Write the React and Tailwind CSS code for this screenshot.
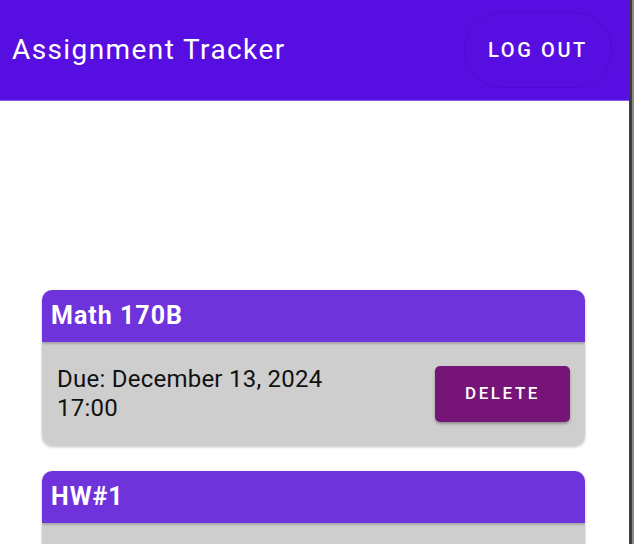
import React from "react";

const assignments = [
  { title: "Math 170B", due: "Due: December 13, 2024", time: "17:00" },
  { title: "HW#1", due: "Due: December 20, 2024", time: "17:00" },
];

const AssignmentCard = ({ title, due, time }) => {
  return (
    <div className="shrink-0 rounded-[10px] overflow-hidden shadow-[0_1px_3px_rgba(0,0,0,0.25)]">
      {/* Header */}
      <div className="h-[52px] bg-[#6f33dc] flex items-center px-[9px] shadow-[0_2px_2px_rgba(0,0,0,0.2)] relative">
        <h2 className="text-white font-bold text-[25px] tracking-[0.04em]">{title}</h2>
      </div>

      {/* Body */}
      <div className="h-[104px] bg-[#cecece] flex items-center justify-between pl-[15px] pr-[15px]">
        <p className="text-[#111] text-[24px] leading-[29px] tracking-[0.01em]">
          {due}
          <br />
          {time}
        </p>
        <button className="w-[135px] h-[56px] rounded-[5px] bg-[#761577] text-white text-[17px] font-medium tracking-[0.15em] shadow-[0_2px_3px_rgba(0,0,0,0.3)]">
          DELETE
        </button>
      </div>
    </div>
  );
};

export default function App() {
  return (
    <div
      className="flex w-[634px] h-[544px] overflow-hidden bg-white"
      style={{ fontFamily: "Roboto, 'Liberation Sans', sans-serif" }}
    >
      <div className="flex-1 flex flex-col">
        {/* Top bar */}
        <div className="shrink-0 h-[101px] bg-[#570ee0] border-b border-[#8b5cf0] flex items-center justify-between pl-[12px] pr-[17px]">
          <h1 className="text-white text-[28px] tracking-[0.05em]">Assignment Tracker</h1>
          <button className="w-[148px] h-[76px] rounded-full border border-[#5209d6] text-white text-[20px] font-medium tracking-[0.13em]">
            LOG OUT
          </button>
        </div>

        {/* List */}
        <div className="flex flex-col gap-[25px] pt-[189px] pl-[42px] pr-[44px]">
          {assignments.map((a, i) => (
            <AssignmentCard key={i} {...a} />
          ))}
        </div>
      </div>

      {/* Window edge */}
      <div className="w-[5px] bg-[#3c3c3c] border-r-2 border-[#8a8a8a]" />
    </div>
  );
}
